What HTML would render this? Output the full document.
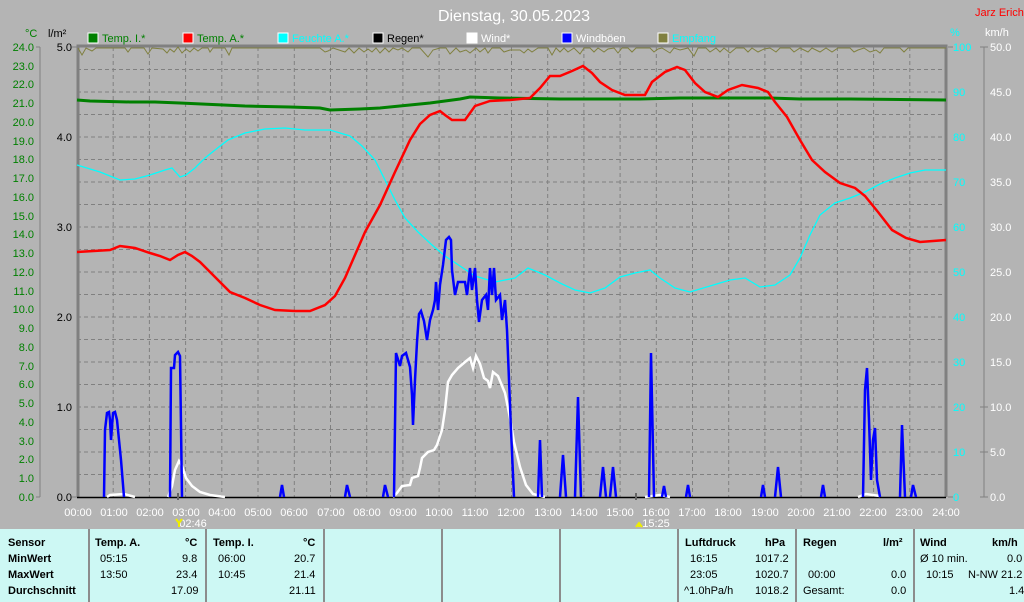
<!DOCTYPE html>
<html><head><meta charset="utf-8"><style>
html,body{margin:0;padding:0;background:#b4b4b4;width:1024px;height:602px;overflow:hidden;font-family:"Liberation Sans",sans-serif}
#tbl{position:absolute;left:0;top:529px;width:1024px;height:73px;background:#cdf8f4;font-size:11px}
.c{position:absolute;top:0;height:73px;border-left:2px solid #8c8c8c}
.t{position:absolute;font-size:11px;color:#000}
.b{font-weight:bold}
</style></head><body>
<svg width="1024" height="529" style="position:absolute;left:0;top:0" font-family="Liberation Sans, sans-serif">
<text x="514" y="21" fill="#fff" font-size="16" text-anchor="middle">Dienstag, 30.05.2023</text>
<text x="975" y="16" fill="#f00" font-size="11">Jarz Erich</text>
<text x="25" y="37" fill="#008000" font-size="11">°C</text>
<text x="48" y="37" fill="#000" font-size="11">l/m²</text>
<text x="950" y="36" fill="#0ff" font-size="11">%</text>
<text x="985" y="36" fill="#fff" font-size="11">km/h</text>
<g font-size="11">
<rect x="88" y="33" width="10" height="10" fill="#008000" stroke="#fff"/><text x="102" y="42" fill="#008000">Temp. I.*</text>
<rect x="183" y="33" width="10" height="10" fill="#f00" stroke="#fff"/><text x="197" y="42" fill="#008000">Temp. A.*</text>
<rect x="278" y="33" width="10" height="10" fill="#0ff" stroke="#fff"/><text x="292" y="42" fill="#0ff">Feuchte A.*</text>
<rect x="373" y="33" width="10" height="10" fill="#000" stroke="#fff"/><text x="387" y="42" fill="#000">Regen*</text>
<rect x="467" y="33" width="10" height="10" fill="#fff" stroke="#fff"/><text x="481" y="42" fill="#fff">Wind*</text>
<rect x="562" y="33" width="10" height="10" fill="#00f" stroke="#fff"/><text x="576" y="42" fill="#fff">Windböen</text>
<rect x="658" y="33" width="10" height="10" fill="#808040" stroke="#fff"/><text x="672" y="42" fill="#0ff">Empfang</text>
</g>
<!-- grid -->
<g stroke="#808080" stroke-dasharray="4,3" stroke-width="1">
<path d="M77 69.5H946M77 92H946M77 114.5H946M77 137H946M77 159.5H946M77 182H946M77 204.5H946M77 227H946M77 249.5H946M77 272H946M77 294.5H946M77 317H946M77 339.5H946M77 362H946M77 384.5H946M77 407H946M77 429.5H946M77 452H946M77 474.5H946"/>
<path d="M113.2 47V497M149.4 47V497M185.6 47V497M221.8 47V497M258 47V497M294.3 47V497M330.5 47V497M366.7 47V497M402.9 47V497M439.1 47V497M475.3 47V497M511.5 47V497M547.7 47V497M583.9 47V497M620.1 47V497M656.3 47V497M692.5 47V497M728.7 47V497M764.9 47V497M801.1 47V497M837.4 47V497M873.6 47V497M909.8 47V497"/>
</g>
<path d="M78 497V46H946V497" fill="none" stroke="#808080" stroke-width="3"/>
<line x1="77" y1="497.5" x2="946" y2="497.5" stroke="#000" stroke-width="1.5"/>
<!-- left axes -->
<line x1="40" y1="47" x2="40" y2="497" stroke="#808080"/>
<g fill="#008000" font-size="11" text-anchor="end">
<text x="34" y="51">24.0</text><text x="34" y="70">23.0</text><text x="34" y="88">22.0</text><text x="34" y="107">21.0</text><text x="34" y="126">20.0</text><text x="34" y="145">19.0</text><text x="34" y="163">18.0</text><text x="34" y="182">17.0</text><text x="34" y="201">16.0</text><text x="34" y="220">15.0</text><text x="34" y="238">14.0</text><text x="34" y="257">13.0</text><text x="34" y="276">12.0</text><text x="34" y="295">11.0</text><text x="34" y="313">10.0</text><text x="34" y="332">9.0</text><text x="34" y="351">8.0</text><text x="34" y="370">7.0</text><text x="34" y="388">6.0</text><text x="34" y="407">5.0</text><text x="34" y="426">4.0</text><text x="34" y="445">3.0</text><text x="34" y="463">2.0</text><text x="34" y="482">1.0</text><text x="34" y="501">0.0</text>
</g>
<g fill="#000" font-size="11" text-anchor="end">
<text x="72" y="51">5.0</text><text x="72" y="141">4.0</text><text x="72" y="231">3.0</text><text x="72" y="321">2.0</text><text x="72" y="411">1.0</text><text x="72" y="501">0.0</text>
</g>
<g fill="#0ff" font-size="11">
<text x="953" y="51">100</text><text x="953" y="96">90</text><text x="953" y="141">80</text><text x="953" y="186">70</text><text x="953" y="231">60</text><text x="953" y="276">50</text><text x="953" y="321">40</text><text x="953" y="366">30</text><text x="953" y="411">20</text><text x="953" y="456">10</text><text x="953" y="501">0</text>
</g>
<line x1="984" y1="47" x2="984" y2="497" stroke="#808080"/>
<g fill="#fff" font-size="11">
<text x="990" y="51">50.0</text><text x="990" y="96">45.0</text><text x="990" y="141">40.0</text><text x="990" y="186">35.0</text><text x="990" y="231">30.0</text><text x="990" y="276">25.0</text><text x="990" y="321">20.0</text><text x="990" y="366">15.0</text><text x="990" y="411">10.0</text><text x="990" y="456">5.0</text><text x="990" y="501">0.0</text>
</g>
<g stroke="#808080"><path d="M36 47H40M36 497H40M72 47H77M72 497H77M948 47H953M948 497H953M980 47H988M980 497H988M980 407H988M980 452H988"/></g>
<!-- x labels -->
<g fill="#fff" font-size="11" text-anchor="middle">
<text x="78" y="516">00:00</text><text x="114" y="516">01:00</text><text x="150" y="516">02:00</text><text x="186" y="516">03:00</text><text x="222" y="516">04:00</text><text x="258" y="516">05:00</text><text x="294" y="516">06:00</text><text x="331" y="516">07:00</text><text x="367" y="516">08:00</text><text x="403" y="516">09:00</text><text x="439" y="516">10:00</text><text x="475" y="516">11:00</text><text x="511" y="516">12:00</text><text x="548" y="516">13:00</text><text x="584" y="516">14:00</text><text x="620" y="516">15:00</text><text x="656" y="516">16:00</text><text x="692" y="516">17:00</text><text x="728" y="516">18:00</text><text x="765" y="516">19:00</text><text x="801" y="516">20:00</text><text x="837" y="516">21:00</text><text x="873" y="516">22:00</text><text x="909" y="516">23:00</text><text x="946" y="516">24:00</text>
<text x="193" y="527">02:46</text><text x="656" y="527">15:25</text>
</g>
<path d="M176 519l3 4 3-4M179 523v4" stroke="#ee0" stroke-width="2" fill="none"/>
<path d="M636 527l3-4 3 4M639 523v4" stroke="#ee0" stroke-width="2" fill="none"/>
<line x1="178" y1="493" x2="178" y2="500" stroke="#666" stroke-width="2"/>
<line x1="636" y1="493" x2="636" y2="500" stroke="#666" stroke-width="2"/>
<!-- Empfang -->
<polyline fill="none" stroke="#808040" stroke-width="1" points="78,48 82,55 86,48 92,51 96,48 125,48 128,52 131,48 144,48 148,54 152,48 163,49 167,53 170,49 174,52 178,47 182,53 186,49 190,52 194,48 198,51 202,48 208,48 210,52 213,48 225,48 229,55 232,48 320,48 325,52 328,51 333,48 345,52 349,48 354,53 359,48 364,52 368,49 372,52 376,48 380,53 385,48 389,52 393,48 398,50 402,48 408,52 412,48 420,48 428,57 433,50 440,48 446,48 450,54 456,48 460,52 466,50 470,53 476,48 480,52 485,48 488,53 492,48 500,48 504,52 510,50 520,50 524,53 528,49 532,52 538,48 548,48 552,55 556,48 560,52 564,48 568,52 574,48 580,54 584,48 590,48 594,52 598,48 604,52 608,49 614,48 618,53 622,48 628,48 632,52 636,48 650,48 654,52 658,49 662,48 670,53 674,48 680,50 688,48 694,56 698,48 706,48 710,52 716,48 720,52 724,48 730,53 736,48 744,48 748,52 752,48 758,52 764,49 770,48 776,52 780,48 790,48 794,52 800,48 808,52 812,48 820,52 826,48 832,52 838,48 850,48 854,52 858,50 864,48 870,52 876,50 880,53 884,48 900,48 904,52 908,48 946,48"/>
<!-- humidity -->
<polyline fill="none" stroke="#0ff" stroke-width="1.3" points="77,165 100,172 120,180 135,179 150,175 165,170 172,168 180,177 186,175 195,168 205,158 215,150 228,140 245,133 265,129 285,128 305,130 330,130 350,136 362,146 375,160 385,180 395,200 405,218 418,232 432,245 445,256 460,266 475,276 495,282 515,278 528,268 545,275 560,283 575,290 590,293 605,288 620,277 635,273 650,270 660,278 675,288 690,292 710,286 730,280 745,278 760,287 775,285 790,275 800,258 810,235 820,215 835,203 850,198 865,192 880,184 895,178 910,173 925,170 946,170"/>
<!-- temp I -->
<polyline fill="none" stroke="#008000" stroke-width="3" points="77,100 90,101 130,102 155,102 180,103 245,106 290,107 320,108 330,110 360,109 380,108 430,103 460,99 470,97 500,98 560,99 640,99 680,98 770,98 800,99 850,99 946,100"/>
<!-- temp A -->
<polyline fill="none" stroke="#f00" stroke-width="2.5" points="77,252 110,250 120,246 135,248 150,253 160,256 170,260 178,255 185,252 192,256 200,262 215,277 230,292 245,298 260,305 275,310 295,311 310,311 325,305 335,296 345,278 355,255 365,232 380,205 395,172 410,140 420,124 430,115 440,111 445,115 452,120 465,120 475,106 490,101 510,100 530,98 540,88 550,76 560,76 572,71 583,66 592,73 600,82 612,90 625,95 645,95 652,82 665,72 677,67 685,70 695,83 705,92 718,97 728,90 742,85 758,88 768,92 775,102 787,117 800,140 812,160 825,172 840,183 855,188 865,196 878,212 892,230 906,238 920,242 933,241 946,240"/>
<!-- wind white -->
<g fill="none" stroke="#fff" stroke-width="2.5">
<polyline points="107,497 110,495 124,494 135,497"/>
<polyline points="168,497 172,486 175,470 179,461 182,466 186,478 192,486 200,492 210,495 225,497"/>
<polyline points="393,497 397,493 402,486 410,485 412,478 418,476 420,468 422,458 428,452 434,450 437,445 442,430 445,410 448,382 452,375 458,368 465,362 470,358 473,368 476,356 480,364 484,378 488,381 490,388 493,372 498,376 505,393 510,418 514,442 520,467 526,485 533,494 545,497"/>
<polyline points="645,497 660,495 670,497"/>
<polyline points="858,497 866,494 880,496"/>
</g>
<!-- windböen -->
<g fill="none" stroke="#00f" stroke-width="2.5">
<polyline points="104,497 105,430 107,413 109,412 110,420 111,440 113,413 115,412 117,420 119,440 121,460 124,497"/>
<polyline points="170,497 171,368 174,368 175,355 178,352 180,356 182,497"/>
<polyline points="280,497 282,485 284,497"/>
<polyline points="345,497 347,485 350,497"/>
<polyline points="383,497 385,485 388,497"/>
<polyline points="394,497 396,353 400,366 402,356 406,353 410,367 412,395 413,425 415,380 417,342 419,314 421,311 424,321 427,340 430,320 433,310 435,300 436,282 438,310 440,285 443,265 446,240 449,237 451,240 452,270 455,295 458,282 465,282 467,295 470,268 472,290 475,268 477,300 479,322 482,300 486,295 488,310 490,268 492,295 494,268 496,300 500,295 502,320 505,300 507,330 509,380 511,430 514,497"/>
<polyline points="538,497 540,440 542,497"/>
<polyline points="560,497 563,455 566,497"/>
<polyline points="575,497 578,397 581,497"/>
<polyline points="600,497 603,467 606,497"/>
<polyline points="610,497 613,467 616,497"/>
<polyline points="649,497 651,353 654,497"/>
<polyline points="662,497 664,486 666,497"/>
<polyline points="686,497 688,485 690,497"/>
<polyline points="761,497 763,485 765,497"/>
<polyline points="775,497 778,467 781,497"/>
<polyline points="821,497 823,485 825,497"/>
<polyline points="863,497 865,390 867,368 869,420 871,480 873,440 875,428 877,480 880,497"/>
<polyline points="900,497 902,425 905,497"/>
<polyline points="911,497 913,485 916,497"/>
</g>
</svg>
<div id="tbl">
<div class="c" style="left:88px"></div><div class="c" style="left:205px"></div><div class="c" style="left:323px"></div><div class="c" style="left:441px"></div><div class="c" style="left:559px"></div><div class="c" style="left:677px"></div><div class="c" style="left:795px"></div><div class="c" style="left:913px"></div>
<div class="t b" style="left:8px;top:8px">Sensor</div><div class="t b" style="left:8px;top:24px">MinWert</div><div class="t b" style="left:8px;top:40px">MaxWert</div><div class="t b" style="left:8px;top:56px">Durchschnitt</div>
<div class="t b" style="left:95px;top:8px">Temp. A.</div><div class="t b" style="left:185px;top:8px">°C</div>
<div class="t" style="left:100px;top:24px">05:15</div><div class="t" style="left:182px;top:24px">9.8</div>
<div class="t" style="left:100px;top:40px">13:50</div><div class="t" style="left:176px;top:40px">23.4</div>
<div class="t" style="left:171px;top:56px">17.09</div>
<div class="t b" style="left:213px;top:8px">Temp. I.</div><div class="t b" style="left:303px;top:8px">°C</div>
<div class="t" style="left:218px;top:24px">06:00</div><div class="t" style="left:294px;top:24px">20.7</div>
<div class="t" style="left:218px;top:40px">10:45</div><div class="t" style="left:294px;top:40px">21.4</div>
<div class="t" style="left:289px;top:56px">21.11</div>
<div class="t b" style="left:685px;top:8px">Luftdruck</div><div class="t b" style="left:765px;top:8px">hPa</div>
<div class="t" style="left:690px;top:24px">16:15</div><div class="t" style="left:755px;top:24px">1017.2</div>
<div class="t" style="left:690px;top:40px">23:05</div><div class="t" style="left:755px;top:40px">1020.7</div>
<div class="t" style="left:684px;top:56px">^1.0hPa/h</div><div class="t" style="left:755px;top:56px">1018.2</div>
<div class="t b" style="left:803px;top:8px">Regen</div><div class="t b" style="left:883px;top:8px">l/m²</div>
<div class="t" style="left:808px;top:40px">00:00</div><div class="t" style="left:891px;top:40px">0.0</div>
<div class="t" style="left:803px;top:56px">Gesamt:</div><div class="t" style="left:891px;top:56px">0.0</div>
<div class="t b" style="left:920px;top:8px">Wind</div><div class="t b" style="left:992px;top:8px">km/h</div>
<div class="t" style="left:920px;top:24px">Ø 10 min.</div><div class="t" style="left:1007px;top:24px">0.0</div>
<div class="t" style="left:926px;top:40px">10:15</div><div class="t" style="left:968px;top:40px">N-NW 21.2</div>
<div class="t" style="left:1009px;top:56px">1.4</div>
</div>
</body></html>
